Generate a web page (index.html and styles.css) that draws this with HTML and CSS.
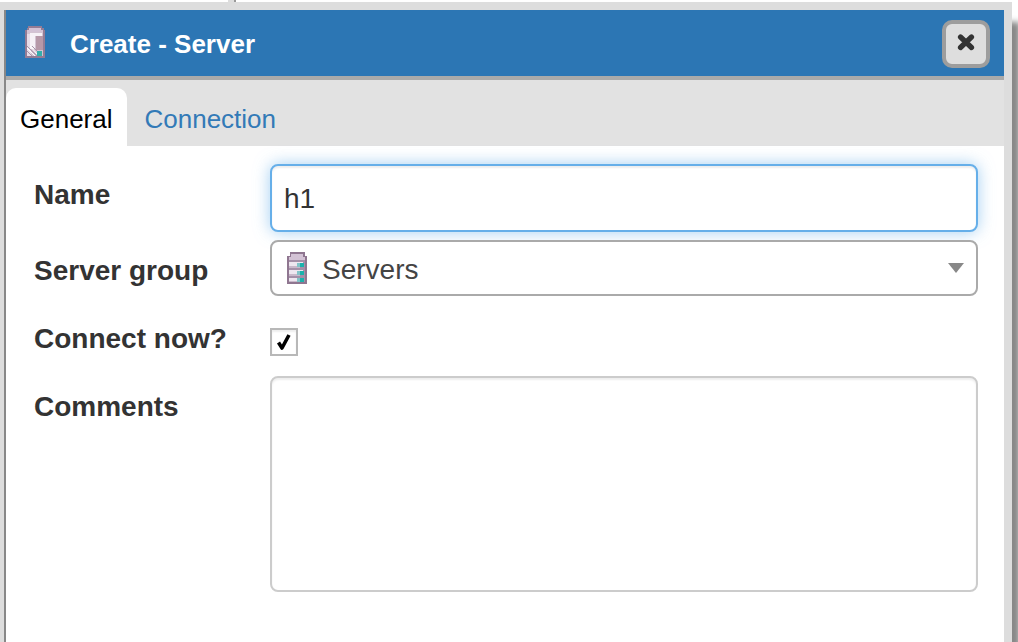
FILE: index.html
```html
<!DOCTYPE html>
<html lang="en">
<head>
<meta charset="utf-8">
<title>Create - Server</title>
<link rel="stylesheet" href="styles.css">
</head>
<body>
<div class="backdrop"><span class="splitter"></span></div>
<main class="dialog">
  <div class="panel">
    <header class="titlebar">
      <svg class="server-icon" viewBox="0 0 22 34" aria-hidden="true">
        <path d="M4 1h14v2h2v2h1v28H1V5h2V3h1z" fill="#937c95"/>
        <path d="M5 3h12v2h2v2H3V5h2z" fill="#d3c2d5"/>
        <path d="M3 7h16v24H3z" fill="#d3c3d2"/>
        <path d="M3 9h4v22H3z" fill="#e6dce8"/>
        <path d="M12 11h7v14h-7z" fill="#b698a8"/>
        <path d="M6 8h12v3h-7v13H6z" fill="#f6f1f7"/>
        <path d="M3 21l10 10M3 26l5 5M8 21l6 6" stroke="#a995a9" stroke-width="1"/>
        <path d="M3 23l8 8M6 21l7 8" stroke="#fff" stroke-width="1"/>
        <path d="M13 26h5v5h-5z" fill="#35aeab"/>
      </svg>
      <h1 class="title">Create - Server</h1>
      <button class="close" type="button" aria-label="Close">
        <svg class="close-icon" viewBox="0 0 18 18" aria-hidden="true"><path d="M3.500 4l11 10.500M14.500 4l-11 10.500" stroke="#333" stroke-width="5.200" stroke-linecap="round"/></svg>
      </button>
    </header>
    <nav class="tabs">
      <a class="tab tab-active" href="#general">General</a>
      <a class="tab" href="#connection">Connection</a>
    </nav>
    <form class="form" id="general">
      <label class="label" for="name">Name</label>
      <input class="field name" id="name" type="text" value="h1">

      <label class="label" for="group">Server group</label>
      <div class="field group">
        <svg class="server-icon" viewBox="0 0 22 34" aria-hidden="true">
          <path d="M4 1h15v4h2v28H1V5h3z" fill="#8f7690"/>
          <path d="M5 3h12v3h2v3H3V6h2z" fill="#d3c2d5"/>
          <path d="M3 9h16v22H3z" fill="#a58fa8"/>
          <path d="M3 11h14v5H3zM3 19h14v5H3zM3 27h14v4H3z" fill="#eee6ef"/>
          <path d="M3 15h11v2H3zM3 23h11v2H3zM3 30h11v1H3z" fill="#c9b8ca"/>
          <path d="M11 12h7v4h-7zM11 20h7v4h-7zM11 27h7v4h-7z" fill="#82c3c8"/>
          <path d="M14 12h4v4h-4zM14 20h4v4h-4zM14 27h4v4h-4z" fill="#1ab2ac"/>
        </svg>
        <select class="select" id="group"><option>Servers</option></select>
        <svg class="arrow" viewBox="0 0 16 10" aria-hidden="true"><path d="M0 0h16L8 10z" fill="#888"/></svg>
      </div>

      <label class="label label-check" for="connect">Connect now?</label>
      <div class="check-cell"><input class="check" id="connect" type="checkbox" checked><svg class="tick" viewBox="0 0 28 28" aria-hidden="true"><path d="M8.500 14.500l3.500 5.500L19 7" fill="none" stroke="#000" stroke-width="3.600" stroke-linejoin="round"/></svg></div>

      <label class="label" for="comments">Comments</label>
      <textarea class="field comments" id="comments"></textarea>
    </form>
  </div>
</main>
</body>
</html>
```

FILE: styles.css
```css
* {
  box-sizing: border-box;
}

body {
  margin: 0;
  height: 100vh;
  overflow: hidden;
  display: flex;
  flex-direction: column;
  background: #fff;
  color: #333;
  font-family: "Liberation Sans", Arial, sans-serif;
  font-size: 28px;
}

.backdrop {
  display: flex;
  height: 2px;
  padding-left: 228px;
}

.splitter {
  width: 8px;
  background: #ddd;
  border-right: 2px solid #999;
}

.dialog {
  flex: 1;
  display: flex;
  margin-right: 6px;
  padding: 8px 8px 0 4px;
  background: #ddd;
  box-shadow: 8px 20px 6px #888;
}

.panel {
  flex: 1;
  min-width: 0;
  border-left: 2px solid #888;
  background: #fff;
}

.titlebar {
  display: flex;
  align-items: center;
  height: 70px;
  padding: 2px 14px 0 18px;
  background: #2c76b4;
  border-bottom: 4px solid #aaa;
}

.server-icon {
  flex: none;
  width: 22px;
  height: 34px;
}

.titlebar .server-icon {
  margin-bottom: 4px;
}

.title {
  flex: 1;
  margin: 0 0 0 24px;
  color: #fff;
  font-size: 26px;
  line-height: 32px;
}

.close {
  display: flex;
  align-items: center;
  justify-content: center;
  width: 48px;
  height: 48px;
  padding: 0 0 4px;
  background: #dedede;
  border: 4px solid #9d9d9d;
  border-radius: 10px;
}

.close-icon {
  width: 18px;
  height: 18px;
}

.tabs {
  display: flex;
  gap: 4px;
  padding-top: 8px;
  background: #e2e2e2;
}

.tab {
  padding: 16px 14px 12px;
  border-radius: 10px 10px 0 0;
  color: #337ab7;
  font-size: 26px;
  line-height: 30px;
  text-decoration: none;
}

.tab-active {
  background: #fff;
  color: #000;
}

.form {
  display: grid;
  grid-template-columns: 236px 1fr;
  row-gap: 8px;
  align-items: start;
  padding: 18px 26px 0 28px;
}

.label {
  padding-top: 15px;
  font-weight: bold;
  line-height: 32px;
}

.label-check {
  padding-top: 19px;
}

.field {
  width: 100%;
  margin: 0;
  padding: 0 12px;
  background: #fff;
  border: 2px solid #aaa;
  border-radius: 8px;
  color: #333;
  font: inherit;
  outline: none;
}

.name {
  height: 68px;
  padding-top: 2px;
  border-color: #66afe9;
  box-shadow: inset 0 2px 2px rgba(0, 0, 0, 0.07), 0 0 16px rgba(102, 175, 233, 0.6);
}

.group {
  display: flex;
  align-items: center;
  height: 56px;
  padding: 0 12px 0 14px;
}

.select {
  flex: 1;
  min-width: 0;
  height: 40px;
  margin: 0 0 0 10px;
  padding: 2px 0 0 4px;
  appearance: none;
  background: transparent;
  border: 0;
  color: #444;
  font: inherit;
  outline: none;
}

.arrow {
  width: 16px;
  height: 10px;
  pointer-events: none;
}

.check-cell {
  display: grid;
  width: 28px;
  height: 64px;
  padding-top: 24px;
}

.check,
.tick {
  grid-area: 1 / 1;
  width: 28px;
  height: 28px;
  margin: 0;
}

.check {
  appearance: none;
  background: #fff;
  border: 2px solid #b8b8b8;
  box-shadow: inset 0 2px 2px #eee;
}

.tick {
  visibility: hidden;
  pointer-events: none;
}

.check:checked + .tick {
  visibility: visible;
}

.comments {
  display: block;
  height: 216px;
  padding: 12px;
  border-color: #ccc;
  box-shadow: inset 0 2px 2px rgba(0, 0, 0, 0.07);
  resize: none;
}
```
